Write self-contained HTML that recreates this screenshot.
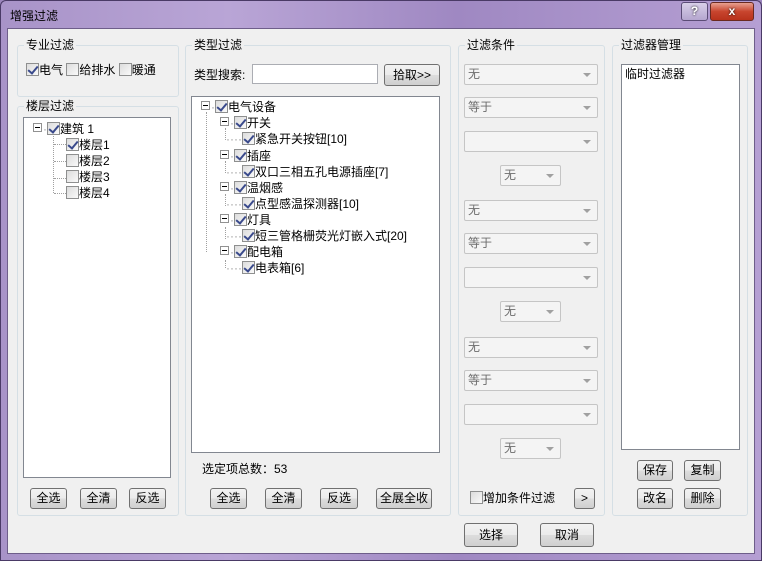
<!DOCTYPE html><html><head><meta charset="utf-8"><style>
*{box-sizing:border-box}
body{margin:0;width:762px;height:561px;overflow:hidden;font-family:"Liberation Sans","Noto Sans CJK SC",sans-serif;font-size:12px;color:#000;background:#9c86bd}
.win{position:absolute;left:0;top:0;width:762px;height:561px;background:linear-gradient(90deg,#a893c8,#b9a5d6 30%,#9f88c2 60%,#b59fd3);border:1px solid #4a3a66;border-radius:6px 6px 0 0}
.client{position:absolute;left:7px;top:28px;width:748px;height:526px;background:#f0f0f0;border:1px solid #6e5e8a}
.a{position:absolute}
.title{left:9px;top:6px;font-size:12px;color:#000}
.grp{position:absolute;border:1px solid #d5dfe5;border-radius:3px}
.gl{position:absolute;background:#f0f0f0;padding:0 2px;top:-9px;left:6px;line-height:16px}
.box{position:absolute;background:#fff;border:1px solid #828790}
.btn{position:absolute;border:1px solid #707070;border-radius:3px;background:linear-gradient(#f2f2f2,#ebebeb 50%,#dddddd 51%,#cfcfcf);text-align:center;line-height:19px}
.cb{display:inline-block;width:13px;height:13px;border:1px solid #8e8f8f;background:linear-gradient(135deg,#dcdcdc,#fafafa);vertical-align:-2px;position:relative}
.cb.c::after{content:"";position:absolute;left:3px;top:0px;width:4px;height:8px;border:solid #3a4a8c;border-width:0 2px 2px 0;transform:rotate(40deg)}
.cmb{position:absolute;height:21px;border:1px solid #c5c5c5;border-radius:2px;background:#f4f4f4;color:#6d6d6d;padding-left:3px;line-height:19px}
.cmb::after{content:"";position:absolute;right:6px;top:8px;border:4px solid transparent;border-top:4px solid #a0a0a0}
.row{position:absolute;white-space:nowrap;line-height:16px}
.pm{display:inline-block;width:9px;height:9px;border:1px solid #919191;background:#fff;position:relative;vertical-align:1px;margin-right:1px}
.pm::after{content:"";position:absolute;left:1px;top:3px;width:5px;height:1px;background:#000}
.dl{position:absolute;border-left:1px dotted #a0a0a0}
.dh{position:absolute;border-top:1px dotted #a0a0a0}
</style></head><body>
<div class="win">
<div class="a title">增强过滤</div>
<div class="a" style="left:680px;top:1px;width:27px;height:19px;border:1px solid #5b4c76;border-radius:3px;background:linear-gradient(#d8cfe8,#b5a6cf);text-align:center;color:#fff;font-weight:bold;line-height:17px;text-shadow:0 0 2px #000">?</div>
<div class="a" style="left:709px;top:1px;width:44px;height:19px;border:1px solid #6a2a20;border-radius:3px;background:linear-gradient(#e8a090,#c8452e 50%,#b8321c);text-align:center;color:#fff;font-weight:bold;line-height:17px;text-shadow:0 0 2px #000">x</div>
</div>
<div class="client"></div>

<div class="grp" style="left:17px;top:45px;width:162px;height:52px"><span class="gl">专业过滤</span></div>
<div class="row" style="left:26px;top:62px"><span class="cb c"></span>电气 <span class="cb"></span>给排水 <span class="cb"></span>暖通</div>

<div class="grp" style="left:17px;top:106px;width:162px;height:410px"><span class="gl">楼层过滤</span></div>
<div class="box" style="left:23px;top:117px;width:148px;height:361px"></div>
<div class="dl" style="left:53px;top:136px;height:57px"></div>
<div class="dh" style="left:54px;top:144px;width:12px"></div>
<div class="dh" style="left:54px;top:161px;width:12px"></div>
<div class="dh" style="left:54px;top:178px;width:12px"></div>
<div class="dh" style="left:54px;top:193px;width:12px"></div>
<div class="row" style="left:33px;top:121px"><span class="pm"></span><span style="color:#999">·</span><span class="cb c"></span>建筑 1</div>
<div class="row" style="left:66px;top:137px"><span class="cb c"></span>楼层1</div>
<div class="row" style="left:66px;top:153px"><span class="cb"></span>楼层2</div>
<div class="row" style="left:66px;top:169px"><span class="cb"></span>楼层3</div>
<div class="row" style="left:66px;top:185px"><span class="cb"></span>楼层4</div>
<div class="btn" style="left:30px;top:488px;width:37px;height:21px">全选</div>
<div class="btn" style="left:80px;top:488px;width:37px;height:21px">全清</div>
<div class="btn" style="left:129px;top:488px;width:37px;height:21px">反选</div>

<div class="grp" style="left:185px;top:45px;width:266px;height:471px"><span class="gl">类型过滤</span></div>
<div class="row" style="left:194px;top:67px">类型搜索:</div>
<div class="box" style="left:252px;top:64px;width:126px;height:20px;border-color:#abadb3"></div>
<div class="btn" style="left:384px;top:64px;width:56px;height:22px;line-height:20px">拾取&gt;&gt;</div>
<div class="box" style="left:191px;top:96px;width:249px;height:357px"></div>
<div class="dl" style="left:206px;top:112px;height:140px"></div>
<div class="dl" style="left:225px;top:128px;height:12px"></div>
<div class="dl" style="left:225px;top:161px;height:12px"></div>
<div class="dl" style="left:225px;top:194px;height:12px"></div>
<div class="dl" style="left:225px;top:227px;height:12px"></div>
<div class="dl" style="left:225px;top:260px;height:8px"></div>
<div class="row" style="left:201px;top:99px"><span class="pm"></span><span style="color:#999">·</span><span class="cb c"></span>电气设备</div>
<div class="row" style="left:220px;top:115px"><span class="pm"></span><span style="color:#999">·</span><span class="cb c"></span>开关</div>
<div class="row" style="left:226px;top:131px"><span style="color:#999">····</span><span class="cb c"></span>紧急开关按钮[10]</div>
<div class="row" style="left:220px;top:148px"><span class="pm"></span><span style="color:#999">·</span><span class="cb c"></span>插座</div>
<div class="row" style="left:226px;top:164px"><span style="color:#999">····</span><span class="cb c"></span>双口三相五孔电源插座[7]</div>
<div class="row" style="left:220px;top:180px"><span class="pm"></span><span style="color:#999">·</span><span class="cb c"></span>温烟感</div>
<div class="row" style="left:226px;top:196px"><span style="color:#999">····</span><span class="cb c"></span>点型感温探测器[10]</div>
<div class="row" style="left:220px;top:212px"><span class="pm"></span><span style="color:#999">·</span><span class="cb c"></span>灯具</div>
<div class="row" style="left:226px;top:228px"><span style="color:#999">····</span><span class="cb c"></span>短三管格栅荧光灯嵌入式[20]</div>
<div class="row" style="left:220px;top:244px"><span class="pm"></span><span style="color:#999">·</span><span class="cb c"></span>配电箱</div>
<div class="row" style="left:226px;top:260px"><span style="color:#999">····</span><span class="cb c"></span>电表箱[6]</div>
<div class="row" style="left:202px;top:461px">选定项总数：53</div>
<div class="btn" style="left:210px;top:488px;width:37px;height:21px">全选</div>
<div class="btn" style="left:265px;top:488px;width:37px;height:21px">全清</div>
<div class="btn" style="left:320px;top:488px;width:38px;height:21px">反选</div>
<div class="btn" style="left:376px;top:488px;width:56px;height:21px">全展全收</div>

<div class="grp" style="left:458px;top:45px;width:147px;height:471px"><span class="gl">过滤条件</span></div>
<div class="cmb" style="left:464px;top:64px;width:134px">无</div>
<div class="cmb" style="left:464px;top:97px;width:134px">等于</div>
<div class="cmb" style="left:464px;top:131px;width:134px"></div>
<div class="cmb" style="left:500px;top:165px;width:61px">无</div>
<div class="cmb" style="left:464px;top:200px;width:134px">无</div>
<div class="cmb" style="left:464px;top:233px;width:134px">等于</div>
<div class="cmb" style="left:464px;top:267px;width:134px"></div>
<div class="cmb" style="left:500px;top:301px;width:61px">无</div>
<div class="cmb" style="left:464px;top:337px;width:134px">无</div>
<div class="cmb" style="left:464px;top:370px;width:134px">等于</div>
<div class="cmb" style="left:464px;top:404px;width:134px"></div>
<div class="cmb" style="left:500px;top:438px;width:61px">无</div>
<div class="row" style="left:470px;top:490px"><span class="cb"></span>增加条件过滤</div>
<div class="btn" style="left:574px;top:488px;width:21px;height:21px">&gt;</div>

<div class="grp" style="left:612px;top:45px;width:136px;height:471px"><span class="gl">过滤器管理</span></div>
<div class="box" style="left:621px;top:64px;width:119px;height:386px"><div style="padding:1px 3px;line-height:16px">临时过滤器</div></div>
<div class="btn" style="left:637px;top:460px;width:36px;height:21px">保存</div>
<div class="btn" style="left:684px;top:460px;width:37px;height:21px">复制</div>
<div class="btn" style="left:637px;top:488px;width:36px;height:21px">改名</div>
<div class="btn" style="left:684px;top:488px;width:37px;height:21px">删除</div>

<div class="btn" style="left:464px;top:523px;width:54px;height:24px;line-height:22px">选择</div>
<div class="btn" style="left:540px;top:523px;width:54px;height:24px;line-height:22px">取消</div>
</body></html>
